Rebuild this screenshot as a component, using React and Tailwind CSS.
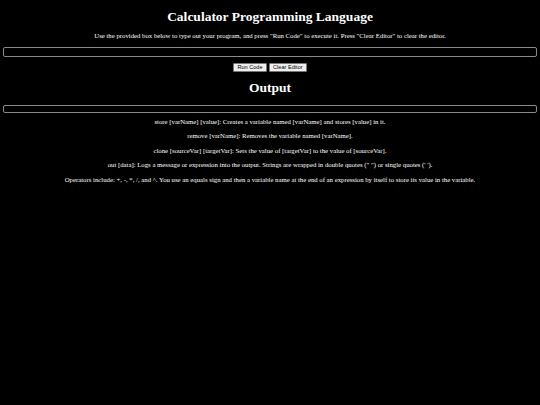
import React, { useState } from 'react';

function App() {
  const [code, setCode] = useState('');
  const [output, setOutput] = useState('');

  const handleRun = () => {
    setOutput(code);
  };

  const handleClear = () => {
    setCode('');
  };

  return (
    <div className="min-h-screen bg-black text-white text-center px-[3.4px] pt-px font-['Liberation_Serif','Times_New_Roman',serif]">
      <h1 className="mt-[7.5px] text-[13.5px] leading-[15.5px] font-bold">Calculator Programming Language</h1>
      <p className="mt-[8.2px] text-[6.75px] leading-[7.75px]">
        Use the provided box below to type out your program, and press "Run Code" to execute it. Press "Clear Editor" to clear the editor.
      </p>
      <textarea
        value={code}
        onChange={(e) => setCode(e.target.value)}
        rows={1}
        className="block mt-[7.3px] w-full h-[9.5px] resize-none bg-black text-white text-[5.6px] border border-[#8a8a8a] rounded-[2px] outline-none"
      />
      <div className="mt-[6.3px] flex justify-center gap-[2.5px] font-['Liberation_Sans',Arial,sans-serif]">
        <button
          onClick={handleRun}
          className="h-[8.8px] px-[3px] text-[5.6px] leading-none text-black bg-[#efefef] border border-[#767676] rounded-[1px]"
        >
          Run Code
        </button>
        <button
          onClick={handleClear}
          className="h-[8.8px] px-[3px] text-[5.6px] leading-none text-black bg-[#efefef] border border-[#767676] rounded-[1px]"
        >
          Clear Editor
        </button>
      </div>
      <h1 className="mt-[8.6px] text-[13.5px] leading-[15.5px] font-bold">Output</h1>
      <div className="mt-[9.4px] h-[7.3px] border border-[#8a8a8a] rounded-[2px] text-[6.75px] leading-[5px] text-left">
        {output}
      </div>
      <div className="mt-[4.9px] text-[6.75px] leading-[7.75px]">
        <p>store [varName] [value]: Creates a variable named [varName] and stores [value] in it.</p>
        <p className="mt-[6.75px]">remove [varName]: Removes the variable named [varName].</p>
        <p className="mt-[6.75px]">clone [sourceVar] [targetVar]: Sets the value of [targetVar] to the value of [sourceVar].</p>
        <p className="mt-[6.75px]">out [data]: Logs a message or expression into the output. Strings are wrapped in double quotes (" ") or single quotes (' ').</p>
        <p className="mt-[6.75px]">Operators include: +, -, *, /, and ^. You use an equals sign and then a variable name at the end of an expression by itself to store its value in the variable.</p>
      </div>
    </div>
  );
}

export default App;
